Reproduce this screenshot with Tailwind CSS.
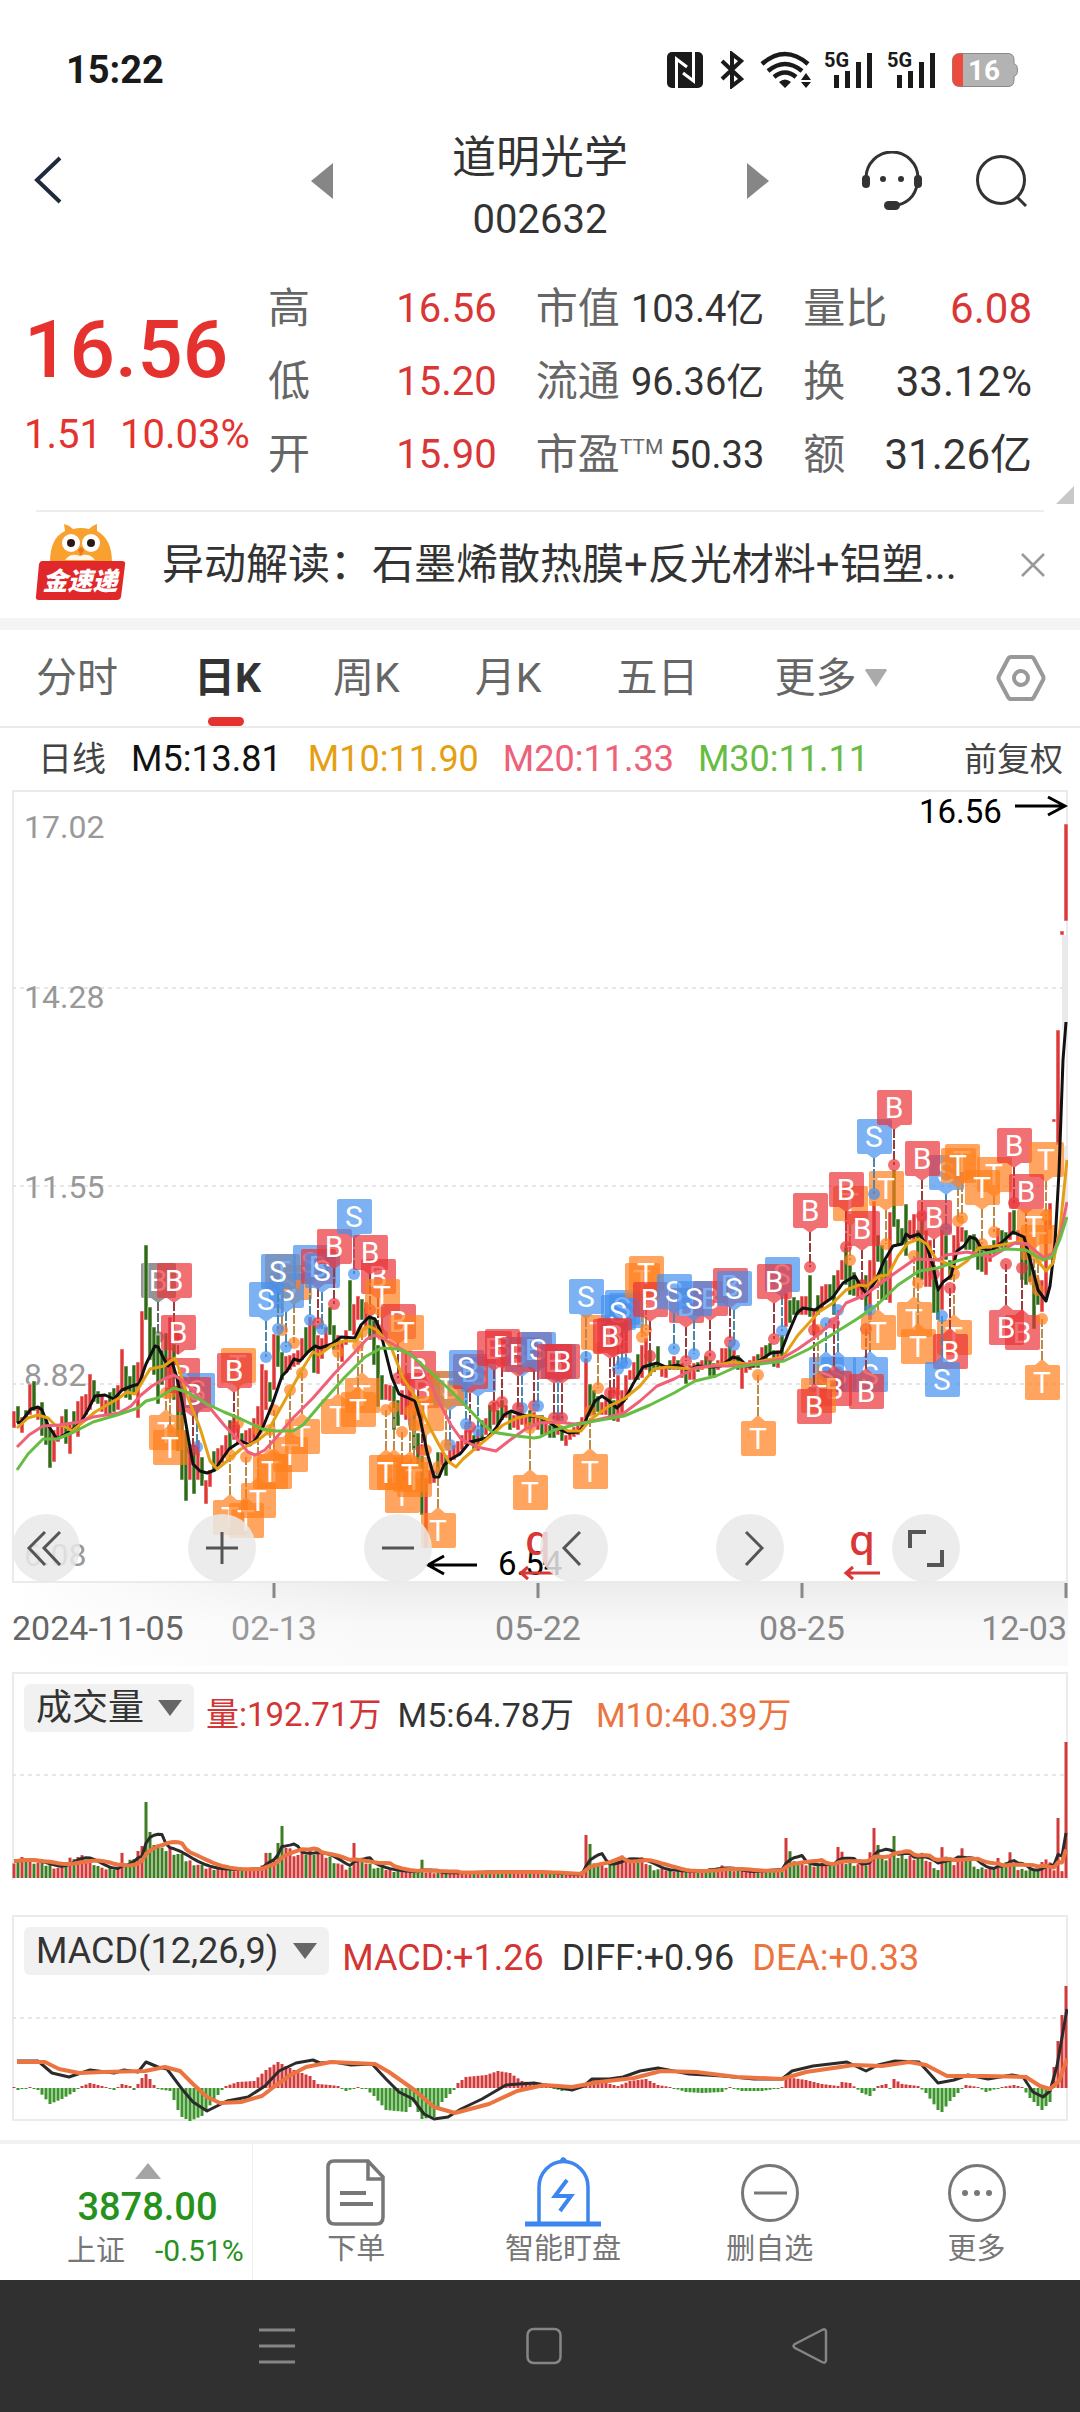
<!DOCTYPE html>
<html lang="zh-CN">
<head>
    <meta charset="UTF-8">
    <meta name="viewport" content="width=device-width, initial-scale=1.0">
    <title>道明光学 002632</title>
    <script src="https://cdn.jsdelivr.net/npm/@tailwindcss/browser@4"></script>
</head>
<body class="bg-white text-[#333] font-[Roboto,'Noto_Sans_CJK_SC',sans-serif]">

    <!-- Status bar -->
    <div class="flex items-center justify-between pt-[48px] pl-[66px] pr-[62px] h-[92px] text-[#1a1a1a]">
        <span class="text-[38px] leading-none font-bold">15:22</span>
        <div class="flex items-center">
            <svg class="w-[36px] h-[36px]" viewBox="0 0 36 36"><rect width="36" height="36" rx="5" fill="#1a1a1a"/><path d="M9.500 36V7L20 15M26.500 0V29L16 21" fill="none" stroke="#fff" stroke-width="3"/></svg>
            <svg class="w-[24px] h-[38px] ml-[17px]" viewBox="0 0 24 38" fill="none" stroke="#1a1a1a" stroke-width="4"><path d="M2 10L21 28L12 35V3L21 10L2 28"/></svg>
            <svg class="w-[52px] h-[38px] ml-[16px]" viewBox="0 0 52 38"><g fill="none" stroke="#1a1a1a" stroke-width="4.500"><path d="M2 13Q25 -7 48 13"/><path d="M8 20Q25 6 42 20"/><path d="M14 26Q25 17 36 26"/></g><path d="M19 31Q25 26 31 31L25 37ZM41 29L46 22L51 29ZM41 31L46 37L51 31Z" fill="#1a1a1a"/></svg>
            <svg class="w-[50px] h-[38px] ml-[12px] overflow-visible" viewBox="0 0 50 38" fill="#1a1a1a"><text x="0" y="16" font-size="20" font-weight="700">5G</text><path d="M10 24h5v13h-5zM21 20h5v17h-5zM32 11h5v26h-5zM43 2h5v35h-5z"/></svg>
            <svg class="w-[50px] h-[38px] ml-[13px] overflow-visible" viewBox="0 0 50 38" fill="#1a1a1a"><text x="0" y="16" font-size="20" font-weight="700">5G</text><path d="M10 24h5v13h-5zM21 20h5v17h-5zM32 11h5v26h-5zM43 2h5v35h-5z"/></svg>
            <svg class="w-[66px] h-[34px] ml-[15px]" viewBox="0 0 66 34"><path d="M8 .5H56Q62 .5 62 7V11Q65.500 11 65.500 17T62 23V27Q62 33.500 56 33.500H8Q.5 33.500 .5 26V8Q.5 .5 8 .5Z" fill="#b3b3b3" stroke="#8a8a8a"/><path d="M11 .5H8Q.5 .5 .5 8V26Q.5 33.500 8 33.500H11Z" fill="#ec4b3f"/><text x="16" y="27" font-size="28" font-weight="700" fill="#fff">16</text></svg>
        </div>
    </div>

    <!-- Title bar -->
    <header class="flex items-center h-[172px] pt-[6px] pl-[33px] pr-[52px]">
        <button class="w-[34px] h-[50px]" aria-label="返回"><svg viewBox="0 0 34 50" fill="none" stroke="#1f2a3d" stroke-width="4"><path d="M27 2L4 24L27 46"/></svg></button>
        <button class="ml-[244px] w-[22px] h-[36px]" aria-label="上一只"><svg viewBox="0 0 22 36"><path d="M22 0V36L0 18Z" fill="#868686"/></svg></button>
        <div class="flex-1 flex flex-col items-center pt-[16px]">
            <h1 class="text-[44px] leading-[62px]">道明光学</h1>
            <p class="text-[40px] leading-[62px]">002632</p>
        </div>
        <button class="w-[22px] h-[36px]" aria-label="下一只"><svg viewBox="0 0 22 36"><path d="M0 0V36L22 18Z" fill="#868686"/></svg></button>
        <button class="ml-[93px] w-[60px] h-[60px]" aria-label="客服"><svg viewBox="0 0 60 60" fill="none" stroke="#333" stroke-width="3"><path d="M4 27A26 26 0 0 1 56 27M56 27Q55 49 36 54"/><g fill="#333" stroke="none"><rect y="24" width="8" height="13" rx="4"/><rect x="52" y="24" width="8" height="13" rx="4"/><circle cx="21" cy="28" r="3"/><circle cx="39" cy="28" r="3"/><rect x="22" y="50" width="16" height="9" rx="4.500"/></g></svg></button>
        <button class="ml-[54px] w-[52px] h-[52px]" aria-label="搜索"><svg viewBox="0 0 52 52" fill="none" stroke="#333" stroke-width="3"><circle cx="25" cy="25" r="23.500"/><path d="M41 42L50 51"/></svg></button>
    </header>

    <!-- Quote -->
    <section class="flex h-[246px] pt-[8px] pl-[24px] pr-[48px]">
        <div class="w-[244px] text-[#e5322f] pt-[31px]">
            <p class="text-[80px] leading-[94px] font-medium">16.56</p>
            <p class="flex gap-[18px] text-[40px] leading-[72px] pt-[2px]"><span>1.51</span><span>10.03%</span></p>
        </div>
        <div class="flex-1 grid grid-cols-3 gap-x-[39px] auto-rows-[73px] items-center text-[42px] leading-[72px] whitespace-nowrap text-[#666]">
            <div class="flex justify-between items-center"><span>高</span><span class="text-[40px] text-[#d93636]">16.56</span></div>
            <div class="flex justify-between items-center"><span>市值</span><span class="text-[38px] text-[#333]">103.4亿</span></div>
            <div class="flex justify-between items-center"><span>量比</span><span class="text-[42px] text-[#d93636]">6.08</span></div>
            <div class="flex justify-between items-center"><span>低</span><span class="text-[40px] text-[#d93636]">15.20</span></div>
            <div class="flex justify-between items-center"><span>流通</span><span class="text-[38px] text-[#333]">96.36亿</span></div>
            <div class="flex justify-between items-center"><span>换</span><span class="text-[42px] text-[#333]">33.12%</span></div>
            <div class="flex justify-between items-center"><span>开</span><span class="text-[40px] text-[#d93636]">15.90</span></div>
            <div class="flex justify-between items-center"><span class="flex">市盈<small class="text-[21px] leading-[56px]">TTM</small></span><span class="text-[38px] text-[#333]">50.33</span></div>
            <div class="flex justify-between items-center"><span>额</span><span class="text-[42px] text-[#333]">31.26亿</span></div>
        </div>
    </section>
    <div class="relative mx-[36px] border-t-2 border-[#ededed]">
        <svg class="absolute right-[-30px] bottom-[8px] w-[18px] h-[18px]" viewBox="0 0 18 18"><path d="M18 0V18H0Z" fill="#c8c8c8"/></svg>
    </div>

    <!-- News strip -->
    <section class="flex items-center h-[106px] px-[35px]">
        <svg class="w-[92px] h-[82px]" viewBox="0 0 92 82">
            <path d="M15 38Q15 14 30 7L29 0Q34 1 38 5Q46 3 54 5Q58 1 62 0L62 7Q77 15 77 38Z" fill="#f9a12f"/>
            <path d="M30 36Q36 28 45 32Q54 28 60 36Z" fill="#fff6e8"/>
            <circle cx="36" cy="19" r="9" fill="#fff"/><circle cx="56" cy="19" r="9" fill="#fff"/>
            <circle cx="36" cy="19" r="4" fill="#2b1a14"/><circle cx="56" cy="19" r="4" fill="#2b1a14"/>
            <path d="M43 26L46 23L49 26L46 32Z" fill="#ef7420"/>
            <path d="M7 37H87Q91 37 90 41L86 73Q85 76 82 76H4Q0 76 1 72L4 40Q5 37 7 37Z" fill="#e0282a"/>
            <text x="45" y="66" text-anchor="middle" font-size="25" font-weight="900" font-style="italic" fill="#fff">金速递</text>
        </svg>
        <p class="flex-1 ml-[35px] text-[42px] leading-[60px] whitespace-nowrap overflow-hidden">异动解读：石墨烯散热膜+反光材料+铝塑...</p>
        <button class="w-[24px] h-[24px]" aria-label="关闭"><svg viewBox="0 0 24 24" stroke="#999" stroke-width="2.500"><path d="M1 1L23 23M23 1L1 23"/></svg></button>
    </section>
    <div class="h-[12px] bg-[#f4f4f4]"></div>

    <!-- Period tabs -->
    <nav class="flex items-center h-[98px] pl-[36px] pr-[34px] text-[41px] leading-[60px] text-[#666] border-b-2 border-[#ebebeb]">
        <a href="#">分时</a>
        <a href="#" class="relative ml-[76px] font-bold text-[#333]">日K<span class="absolute left-1/2 -ml-[20px] -bottom-[18px] w-[36px] h-[9px] rounded-full bg-[#e5322f]"></span></a>
        <a href="#" class="ml-[72px]">周K</a>
        <a href="#" class="ml-[75px]">月K</a>
        <a href="#" class="ml-[75px]">五日</a>
        <a href="#" class="ml-[76px] flex items-center gap-[8px]">更多<svg class="w-[22px] h-[18px]" viewBox="0 0 24 20"><path d="M1 0H23Q25 1 23 3L12 20L1 3Q-1 1 1 0Z" fill="#aaa"/></svg></a>
        <button class="ml-auto w-[50px] h-[46px]" aria-label="设置"><svg viewBox="0 0 50 46" fill="none" stroke="#999" stroke-width="4"><path d="M15 2H35Q37 2 38 4L47 21Q48 23 47 25L38 42Q37 44 35 44H15Q13 44 12 42L3 25Q2 23 3 21L12 4Q13 2 15 2Z"/><circle cx="25" cy="23" r="7"/></svg></button>
    </nav>

    <div class="flex items-center h-[62px] pl-[38px] pr-[17px] text-[36px] leading-none text-[#444]">
        <span class="text-[34px]">日线</span>
        <span class="ml-[25px] text-[#111]">M5:13.81</span>
        <span class="ml-[26px] text-[#e59f13]">M10:11.90</span>
        <span class="ml-[24px] text-[#ef6079]">M20:11.33</span>
        <span class="ml-[24px] text-[#67bd43]">M30:11.11</span>
        <span class="ml-auto text-[33px]">前复权</span>
    </div>

    <!-- K line chart -->
    <section class="relative mx-[12px]">
        <svg id="kline" class="block w-full" viewBox="0 0 1056 793"></svg>
        <div class="absolute inset-x-0 bottom-[1px] flex justify-between pr-[108px]">
            <button class="w-[68px] h-[68px] rounded-full bg-[#e9e9e9]/85" aria-label="最早"><svg viewBox="0 0 68 68" fill="none" stroke="#555" stroke-width="3"><path d="M33 18L17 34L33 51M48 18L32 34L48 51"/></svg></button>
            <button class="w-[68px] h-[68px] rounded-full bg-[#e9e9e9]/85" aria-label="放大"><svg viewBox="0 0 68 68" fill="none" stroke="#555" stroke-width="3"><path d="M18 34H50M34 18V50"/></svg></button>
            <button class="w-[68px] h-[68px] rounded-full bg-[#e9e9e9]/85" aria-label="缩小"><svg viewBox="0 0 68 68" fill="none" stroke="#555" stroke-width="3"><path d="M18 34H50"/></svg></button>
            <button class="w-[68px] h-[68px] rounded-full bg-[#e9e9e9]/85" aria-label="左移"><svg viewBox="0 0 68 68" fill="none" stroke="#555" stroke-width="3"><path d="M40 18L24 34L40 51"/></svg></button>
            <button class="w-[68px] h-[68px] rounded-full bg-[#e9e9e9]/85" aria-label="右移"><svg viewBox="0 0 68 68" fill="none" stroke="#555" stroke-width="3"><path d="M30 18L46 34L30 51"/></svg></button>
            <button class="w-[68px] h-[68px] rounded-full bg-[#e9e9e9]/85" aria-label="全屏"><svg viewBox="0 0 68 68" fill="none" stroke="#555" stroke-width="4"><path d="M18 34V18H34M50 36V51H35"/></svg></button>
        </div>
    </section>
    <div class="mx-[12px] bg-linear-to-b from-[#ececec] via-[#f8f8f8] via-50% to-[#fafafa]">
        <svg class="block w-full bg-linear-to-r from-white to-transparent to-35%" viewBox="0 0 1056 83" font-size="34" fill="#888">
            <path d="M262 0V15M526 0V15M790 0V15M1054 0V15" stroke="#888" stroke-width="3"/>
            <text x="0" y="57" fill="#666">2024-11-05</text>
            <text x="262" y="57" text-anchor="middle" fill="#999">02-13</text>
            <text x="526" y="57" text-anchor="middle">05-22</text>
            <text x="790" y="57" text-anchor="middle">08-25</text>
            <text x="1055" y="57" text-anchor="end">12-03</text>
        </svg>
    </div>

    <!-- Volume -->
    <section class="relative mx-[12px] mt-[6px]">
        <svg id="volume" class="block w-full" viewBox="0 0 1056 208"></svg>
        <div class="absolute left-[12px] top-[12px] flex items-start text-[34px] leading-[48px] whitespace-nowrap">
            <button class="flex items-center gap-[14px] h-[48px] px-[12px] rounded-md bg-[#f1f1f1] text-[36px]">成交量<svg class="w-[24px] h-[16px]" viewBox="0 0 24 16"><path d="M0 0H24L12 16Z" fill="#666"/></svg></button>
            <span class="ml-[12px] mt-[7px] text-[33px] text-[#d33535]">量:192.71万</span>
            <span class="ml-[16px] mt-[7px]">M5:64.78万</span>
            <span class="ml-[22px] mt-[7px] text-[#ec7440]">M10:40.39万</span>
        </div>
    </section>

    <!-- MACD -->
    <section class="relative mx-[12px] mt-[35px]">
        <svg id="macd" class="block w-full" viewBox="0 0 1056 208"></svg>
        <div class="absolute left-[12px] top-[12px] flex items-start text-[36px] leading-[48px] whitespace-nowrap">
            <button class="flex items-center gap-[15px] h-[48px] px-[12px] rounded-md bg-[#f1f1f1]">MACD(12,26,9)<svg class="w-[24px] h-[16px]" viewBox="0 0 24 16"><path d="M0 0H24L12 16Z" fill="#666"/></svg></button>
            <span class="ml-[13px] mt-[7px] text-[#d33535]">MACD:+1.26</span>
            <span class="ml-[18px] mt-[7px]">DIFF:+0.96</span>
            <span class="ml-[18px] mt-[7px] text-[#ec7440]">DEA:+0.33</span>
        </div>
    </section>

    <!-- Bottom toolbar -->
    <footer class="flex mt-[17px] h-[140px] border-t-4 border-[#f1f1f1] text-[29px] leading-[36px] text-[#777] whitespace-nowrap">
        <a href="#" class="w-[253px] flex flex-col items-center pt-[19px] pl-[43px] border-r border-[#eee]">
            <svg class="w-[26px] h-[16px]" viewBox="0 0 26 16"><path d="M13 0L26 16H0Z" fill="#a5a5a5"/></svg>
            <b class="text-[38px] leading-[56px] font-medium text-[#26921b]">3878.00</b>
            <span class="flex gap-[30px] w-full pl-[24px] leading-[32px]"><span>上证</span><span class="text-[30px] text-[#26921b]">-0.51%</span></span>
        </a>
        <div class="flex-1 grid grid-cols-4">
            <button class="flex flex-col items-center pt-[15px]"><svg class="w-[60px] h-[68px] mb-[4px]" viewBox="0 0 60 68" fill="none" stroke="#777" stroke-width="3.500"><path d="M8 2H42L57 18V58Q57 65 50 65H9Q2 65 2 58V8Q2 2 8 2ZM42 2V20H57"/><path d="M14 34H40M14 45H47" stroke-width="4"/></svg>下单</button>
            <button class="flex flex-col items-center pt-[13px]"><svg class="w-[76px] h-[70px] mb-[4px]" viewBox="0 0 76 70" fill="none" stroke="#3c86f0" stroke-width="4"><path d="M14 66V30A24 25 0 0 1 63 30V66" stroke-width="3.500"/><path d="M0 67H76" stroke-width="5"/><path d="M34 6Q35 1 38 0Q42 1 43 6Z" fill="#3c86f0" stroke="none"/><path d="M42 23L30 39H46L35 54"/></svg>智能盯盘</button>
            <button class="flex flex-col items-center pt-[19px]"><svg class="w-[60px] h-[60px] mb-[8px]" viewBox="0 0 60 60" fill="none" stroke="#777" stroke-width="3"><circle cx="30" cy="30" r="27.500"/><path d="M14 30H47"/></svg>删自选</button>
            <button class="flex flex-col items-center pt-[19px]"><svg class="w-[60px] h-[60px] mb-[8px]" viewBox="0 0 60 60" fill="none" stroke="#777" stroke-width="3"><circle cx="30" cy="30" r="27.500"/><g fill="#777" stroke="none"><circle cx="18" cy="30" r="3"/><circle cx="30" cy="30" r="3"/><circle cx="42" cy="30" r="3"/></g></svg>更多</button>
        </div>
    </footer>

    <!-- System navigation -->
    <div class="flex items-center justify-between h-[132px] pl-[259px] pr-[252px] bg-[#303030]">
        <button aria-label="最近任务"><svg class="w-[36px] h-[38px]" viewBox="0 0 36 38" stroke="#858585" stroke-width="3"><path d="M0 3H36M0 19H36M0 35H36"/></svg></button>
        <button aria-label="主页"><svg class="w-[36px] h-[38px]" viewBox="0 0 36 38" fill="none" stroke="#858585" stroke-width="2.500"><rect x="1.500" y="2" width="33" height="34" rx="6"/></svg></button>
        <button aria-label="返回上级"><svg class="w-[36px] h-[38px]" viewBox="0 0 36 38" fill="none" stroke="#858585" stroke-width="2.500"><path d="M30 3Q34 1 34 5V33Q34 37 30 35L3 21Q0 19 3 17Z"/></svg></button>
    </div>

    <script>
        const RED = '#e03636', GREEN = '#2f6a17';
        const step = 4, x0 = 2;

        // one entry per trading day: direction, top, bottom
        const candles = `r621,638 g616,633 r627,643 g620,630 r594,625 g591,621 r616,630 g612,646 g628,655 g638,678 r640,672 r636,652
r626,648 g619,654 r633,664 g621,640 r611,647 r606,630 r604,625 r584,620 g590,612 g601,614 r604,622 r610,625 g602,624 g598,622
r595,620 r559,600 g576,608 g586,610 g575,605 r572,628 r521,590 g455,530 g517,570 g537,585 g545,614 g560,595 g543,590 r527,600
g554,610 g580,661 g590,690 g640,711 r660,690 g655,704 r650,690 g667,696 r690,714 r680,697 g661,680 r658,675 r655,673 r645,665
g630,660 r625,650 r635,655 g643,655 r640,652 r638,655 r628,650 r616,645 r574,640 r580,620 g592,612 r544,600 g545,577 g562,590
r566,583 r565,580 r563,577 r560,575 r548,570 g537,565 r527,560 g535,583 r545,584 r548,569 r537,560 g517,545 g535,560 r545,560
r550,572 r540,555 g490,541 r514,545 r506,530 g509,530 r512,540 g525,550 g530,575 g555,617 g585,610 r594,610 r595,611 g596,640
g610,636 r600,625 r605,630 r600,635 g620,660 g643,675 g666,725 r688,758 r680,694 r680,693 g662,685 r662,675 g665,686 r660,672
r655,670 r651,666 r645,660 r640,655 r640,655 g645,661 r640,661 g630,650 r628,645 g615,640 r612,635 g620,635 g610,630 r615,628
g622,640 r625,638 r622,640 r620,635 r625,640 g620,640 r622,637 r625,640 g625,645 r632,645 g635,648 g635,648 r637,645 g638,651
r645,656 r642,650 r637,647 r635,645 r627,640 r568,635 g594,625 g600,625 g606,622 r612,625 r610,625 g600,630 g610,631 r585,632
r600,625 r585,610 r580,590 r572,590 g564,590 r555,588 r548,580 g560,586 g575,582 g556,580 r575,587 r575,588 g570,580 r566,580
g570,580 r573,588 g578,594 r575,590 r573,590 g572,582 r570,580 g566,578 g570,586 g573,588 r570,580 r558,576 r558,573 g556,575
r560,575 g565,580 r575,599 r573,583 r570,580 r566,578 g564,578 r557,575 g555,570 g553,565 g560,577 r560,578 g545,572 r503,537
g510,533 g507,525 g510,525 r506,525 r506,525 g485,527 r520,545 g505,525 r496,520 r494,512 g494,508 g485,525 r480,500 r470,490
g457,495 g475,505 g482,506 r490,508 r490,510 g485,521 r470,530 r411,490 g445,472 g455,510 g470,510 r422,513 g380,437 g429,455
g438,455 g414,466 r430,450 r424,450 g440,488 g430,490 r440,497 r450,497 g475,523 g500,530 r440,520 g445,470 g470,490 r445,480
r436,460 r437,452 g440,460 g445,460 g444,465 g450,480 g460,482 r460,485 r455,472 g450,464 r438,460 g440,458 g442,460 r422,450
g420,445 r440,455 g445,490 g453,495 g460,492 g480,539 g490,515 r490,522 r430,510 r413,440 r329,332 r240,355 r141,145 r34,131`
            .split(/\s+/).map(c => [c[0], ...c.slice(1).split(',').map(Number)]);

        const averages = [
            ['#111', '5,633 9,632 19,619 26,617 30,620 36,635 45,649 52,645 60,640 69,632 76,620 83,606 93,605 102,609 110,600 120,596 127,594 134,574 143,556 146,557 152,569 156,576 160,572 165,588 170,611 177,652 181,674 188,681 195,683 203,680 208,672 217,659 229,651 238,655 244,649 251,637 260,615 270,586 275,581 282,569 288,571 296,562 303,556 308,558 320,554 329,547 343,548 349,535 357,527 363,529 368,540 374,564 380,588 387,604 403,611 408,628 415,662 422,687 427,687 432,675 439,669 448,664 458,652 475,648 484,638 492,625 499,621 510,625 528,627 538,633 549,640 557,643 566,642 571,637 576,625 583,611 590,606 597,611 605,618 612,611 621,594 631,577 645,573 654,577 666,575 676,580 686,576 700,577 709,576 721,567 728,569 735,576 741,576 750,569 759,563 769,562 776,544 785,523 791,518 803,520 814,512 821,507 831,493 843,486 848,495 855,505 864,490 872,471 881,456 890,454 894,444 898,447 907,444 914,454 921,476 926,500 931,492 939,486 945,461 952,456 958,447 964,449 969,458 979,461 989,453 1001,442 1012,447 1019,473 1026,500 1034,511 1038,496 1043,453 1047,382 1051,270 1054,232'],
            ['#e59f13', '5,638 16,628 26,625 36,628 43,635 52,636 60,641 71,632 83,622 95,615 107,608 115,602 123,604 129,594 138,579 152,576 163,568 167,579 176,608 188,638 198,671 205,679 214,672 229,659 245,651 255,643 263,628 277,603 291,578 301,562 307,565 319,556 332,551 344,551 351,540 356,536 365,540 379,557 391,588 406,611 415,632 427,655 437,672 444,677 451,669 465,657 477,647 491,635 505,628 518,625 528,627 542,632 556,641 569,641 578,630 597,616 612,609 628,596 642,579 655,577 680,579 700,576 721,572 735,574 755,570 771,567 786,545 807,522 821,513 834,500 847,495 855,496 867,486 876,485 886,466 896,453 907,449 915,454 924,469 934,473 945,478 955,471 967,458 983,456 1007,452 1017,455 1026,471 1034,481 1041,473 1048,439 1055,370'],
            ['#ef6079', '5,657 17,645 31,636 47,635 67,632 81,627 107,623 119,616 129,605 140,596 152,589 162,585 171,591 183,603 198,618 212,635 226,650 236,662 243,665 253,660 263,649 281,628 301,608 322,584 343,562 355,549 363,545 374,550 389,559 401,566 412,579 425,608 439,635 449,649 465,657 484,661 498,650 515,638 528,633 545,632 562,634 576,632 597,627 612,623 628,611 645,596 662,589 683,578 697,576 717,576 741,574 769,569 786,559 803,547 821,532 834,513 853,505 869,493 883,483 903,469 926,470 934,465 955,462 979,467 1003,453 1015,454 1032,468 1041,463 1048,446 1055,412'],
            ['#67bd43', '5,680 16,664 31,649 45,649 62,642 81,632 105,625 126,618 134,611 146,608 162,598 177,603 195,614 212,622 229,629 250,639 263,641 281,641 291,635 308,615 332,588 353,567 369,558 386,559 398,564 415,579 436,598 453,615 470,633 480,642 505,646 522,648 528,647 542,640 562,635 583,631 612,626 638,615 662,603 683,591 704,586 724,577 748,574 772,571 797,559 821,544 845,529 865,515 886,495 907,481 926,478 945,471 969,464 993,459 1014,460 1024,466 1032,470 1041,466 1048,449 1055,427']
        ];

        // signal flags: letter, x, y of the box centre, y of the dot
        const flags = [
            ['T',154,642,603],['T',158,657,603],['B',162,490,547],['B',166,542,547],['B',170,585,600],['S',185,600,657],['B',181,604,660],
            ['T',226,575,633],['B',222,580,637],['T',218,727,665],['T',234,730,667],['T',246,710,640],['T',262,681,620],['T',258,681,640],['T',278,664,600],['T',290,646,583],
            ['T',282,492,553],['S',274,500,557],['T',270,481,540],['S',254,509,567],['S',266,481,539],
            ['S',298,472,530],['B',306,476,533],['S',310,480,539],['B',322,456,514],['S',342,426,484],['T',326,626,562],['T',350,605,542],['T',346,619,556],
            ['B',366,486,540],['B',358,462,520],['T',370,506,545],['B',386,531,588],['T',394,542,590],['B',410,600,660],['B',406,578,620],['T',414,623,660],
            ['T',390,705,642],['T',382,682,617],['T',374,682,620],['T',402,689,635],['T',398,684,621],['T',426,740,677],
            ['S',438,598,655],['T',434,598,655],['S',466,584,641],['B',458,581,637],['S',454,577,634],
            ['B',482,558,616],['B',490,556,612],['S',510,564,618],['B',506,564,618],['B',522,559,616],['S',526,559,616],['T',518,702,638],
            ['S',546,571,628],['B',542,571,628],['B',550,571,628],['T',578,681,621],['S',574,506,567],['T',586,542,598],['S',614,520,573],['S',610,517,573],['S',606,522,579],
            ['B',602,545,603],['B',598,546,603],['T',630,490,547],['T',634,483,540],['B',638,509,566],['B',674,515,571],['S',662,501,559],['B',698,508,566],['S',682,508,564],
            ['B',718,495,552],['S',722,498,555],['S',770,484,541],['B',762,491,549],['T',746,648,585],
            ['B',798,420,477],['T',838,413,470],['B',834,399,457],['B',850,438,495],['T',874,398,454],['S',862,346,404],['B',882,317,375],
            ['S',858,584,520],['S',826,584,520],['S',814,584,533],['B',822,598,533],['T',806,605,540],['B',802,616,540],['B',854,601,539],['T',866,542,490],
            ['S',934,382,439],['B',910,368,426],['B',922,427,484],['T',950,371,428],['T',946,375,431],['T',982,384,442],['T',970,397,454],
            ['T',902,529,466],['T',906,556,493],['T',942,547,484],['B',938,561,498],['S',930,589,526],
            ['B',1002,355,413],['T',1034,369,426],['B',1014,401,458],['T',1026,452,500],['T',1022,436,490],['B',1010,542,478],['B',994,537,474],['T',1030,592,529]
        ];
        const flagColors = { B: '#e93338', S: '#4590ee', T: '#ff7f1b' };
        const stemColors = { B: '#9a3b3f', S: '#4b87ab', T: '#bf8a48' };

        function flag(letter, x, y, dot, color = flagColors[letter], stem = stemColors[letter]) {
            const below = y > dot;
            const edge = below ? y - 22 : y + 22;
            const tip = below
                ? `M${x - 7} ${y - 17}L${x} ${y - 23}L${x + 7} ${y - 17}Z`
                : `M${x - 7} ${y + 18}L${x} ${y + 23}L${x + 7} ${y + 18}Z`;
            return `<path d="M${x} ${edge}V${dot}" stroke="${stem}" stroke-width="2" stroke-dasharray="9 2"/>
                <circle cx="${x}" cy="${dot}" r="6" fill="${color}" fill-opacity=".7"/>
                <g fill="${color}" fill-opacity=".7"><rect x="${x - 17}" y="${y - 17}" width="35" height="35" rx="2"/><path d="${tip}"/></g>
                <text x="${x}" y="${y + 11}" text-anchor="middle" font-size="30" fill="#fff">${letter}</text>`;
        }

        const line = (pts, color, w) => `<polyline points="${pts}" fill="none" stroke="${color}" stroke-width="${w}" stroke-linejoin="round"/>`;
        const dash = y => `<path d="M0 ${y}H1056" stroke="#e6e6e6" stroke-width="2" stroke-dasharray="4 4"/>`;
        const frame = h => `<rect x="1" y="1" width="1054" height="${h - 2}" fill="#fff" stroke="#ebebeb" stroke-width="2"/>`;

        document.getElementById('kline').innerHTML = frame(793) + dash(198) + dash(396) + dash(594)
            + `<path d="M1050 145h6v95h-6zM1052 356h4v60h-4z" fill="#e9e9e9"/>`
            + `<g font-size="32" fill="#999"><text x="12" y="48">17.02</text><text x="12" y="218">14.28</text><text x="12" y="408">11.55</text><text x="12" y="596">8.82</text><text x="12" y="776">6.08</text></g>`
            + flag('B', 146, 490, 547, '#666', '#666')
            + candles.map(([d, t, b], i) => `<rect x="${x0 + i * step - 2}" y="${t}" width="4" height="${b - t}" fill="${d === 'r' ? RED : GREEN}" stroke="#fff" stroke-opacity=".55" stroke-width="1"/>`).join('')
            + flags.map(f => flag(...f)).join('')
            + averages.map(([c, p]) => line(p, c, 3)).join('')
            + `<g font-size="33" fill="#000"><text x="907" y="33">16.56</text><text x="486" y="785">6.54</text></g>
               <path d="M1003 16H1053M1036 7L1053 16L1036 25M465 775H416M432 766L416 775L432 784" fill="none" stroke="#000" stroke-width="3"/>
               <g fill="#d93636" font-size="42" font-weight="500" font-family="Noto Sans"><text x="513" y="765">q</text><text x="837" y="765">q</text></g>
               <path d="M541 783H509M516 777L509 783L516 789M868 783H834M841 777L834 783L841 789" fill="none" stroke="#d93636" stroke-width="3"/>`;

        // expands "index:value" keys into one value per day
        function spread(keys) {
            const k = keys.split(' ').map(s => s.split(':').map(Number));
            const out = [];
            for (let j = 0; j < k.length - 1; j++) {
                const [a, va] = k[j], [b, vb] = k[j + 1];
                for (let i = a; i < b; i++) out[i] = va + (vb - va) * (i - a) / (b - a);
            }
            const [n, v] = k[k.length - 1];
            out[n] = v;
            return out;
        }

        function mean(values, n) {
            return values.map((_, i) => {
                const part = values.slice(Math.max(0, i - n + 1), i + 1);
                return part.reduce((s, v) => s + v, 0) / part.length;
            });
        }

        const volume = spread('0:17 3:19 9:12 11:10 15:22 19:18 22:9 26:10 27:22 28:12 30:22 32:32 33:76 34:46 35:33 38:29 40:27 43:18 48:10 55:8 61:10 62:11 63:27 65:20 66:35 67:52 68:30 71:23 75:27 79:20 83:9 84:10 85:35 86:20 90:11 95:7 101:6 102:16 103:6 107:5 117:6 130:6 141:3 142:6 143:43 144:34 145:17 148:11 151:20 157:18 160:9 169:6 177:11 182:6 191:9 192:8 193:40 194:25 196:14 201:13 205:15 206:31 208:15 213:13 214:24 215:50 216:33 217:18 219:20 220:42 221:20 227:22 231:8 232:27 235:15 237:26 241:9 245:10 246:20 247:10 249:24 251:8 256:8 258:20 260:9 261:60 262:6 263:136');
        const base = 206;
        const toPts = v => v.map((h, i) => `${x0 + i * step},${(base - h).toFixed(1)}`).join(' ');
        document.getElementById('volume').innerHTML = `<path d="M1 208V1H1055V208" fill="none" stroke="#ebebeb" stroke-width="2"/>` + dash(103)
            + volume.map((v, i) => {
                const h = v + (v < 30 ? (i * 7 % 5 - 2) * v / 14 : 0);
                return `<rect x="${x0 + i * step - 1.5}" y="${base - h}" width="3" height="${h}" fill="${candles[i][0] === 'r' ? '#d23b3b' : '#3f7d22'}"/>`;
            }).join('')
            + line(toPts(mean(volume, 5)), '#2b2b2b', 3)
            + line(toPts(mean(volume, 10)), '#ec7440', 4);

        const hist = spread('0:1 1:-2 4:1 6:-2 9:-16 12:-11 15:-4 16:-1 17:2 19:5 23:1 25:-2 27:4 29:2 30:-2 31:4 32:10 33:14 34:9 35:3 36:-1 39:-3 40:-12 41:-22 42:-29 44:-33 47:-28 50:-12 52:-2 53:2 56:6 60:7 63:18 66:26 70:18 74:12 76:4 79:3 81:2 83:-3 86:1 88:-1 90:-8 93:-22 98:-24 100:-14 101:-24 102:-31 105:-29 107:-14 110:-2 111:5 113:11 118:13 121:17 124:15 127:7 131:4 134:1 137:-3 141:-1 142:1 143:5 146:9 149:4 151:2 154:7 158:9 161:3 164:1 168:-4 172:-5 177:-4 179:1 182:-3 187:-3 190:-1 192:1 193:11 198:8 202:4 206:2 207:6 209:5 212:-5 214:-8 216:2 218:4 219:-1 220:9 222:4 226:2 228:-5 231:-22 232:-24 234:-13 237:-1 238:3 241:1 243:-4 247:1 250:3 252:1 254:-10 257:-22 259:-14 260:21 261:47 262:73 263:102');
        const diff = '5,146 26,146 40,158 57,162 78,155 102,158 112,155 126,157 134,147 146,152 155,154 170,174 181,187 195,196 215,186 236,182 253,171 267,156 284,148 301,145 308,148 322,147 339,150 360,149 374,164 387,177 401,184 412,199 422,204 436,202 449,194 470,184 494,170 522,168 539,171 560,175 572,171 580,164 597,164 611,162 628,156 646,153 677,159 711,161 742,164 770,164 780,156 801,151 835,147 854,156 866,150 883,146 907,147 918,159 926,168 942,165 956,160 976,164 1000,160 1011,162 1021,177 1031,182 1038,176 1045,151 1055,94';
        const dea = '5,147 33,147 47,154 67,158 91,157 133,156 153,152 168,156 181,169 195,182 208,188 229,187 250,181 263,171 277,161 294,152 319,147 363,149 377,157 401,174 422,192 443,198 477,189 505,176 532,170 560,172 587,167 622,163 649,156 684,157 725,162 770,164 794,157 842,150 870,151 897,147 914,150 935,161 973,161 1014,162 1028,171 1038,174 1047,166 1055,144';
        document.getElementById('macd').innerHTML = frame(206) + dash(103)
            + hist.map((v, i) => `<rect x="${x0 + i * step - 1.5}" y="${v > 0 ? 173 - v : 173}" width="3" height="${Math.max(1, Math.abs(v))}" fill="${v > 0 ? '#d23b3b' : '#3d962b'}"/>`).join('')
            + line(diff, '#2b2b2b', 3) + line(dea, '#ec7440', 4);
    </script>
</body>
</html>
